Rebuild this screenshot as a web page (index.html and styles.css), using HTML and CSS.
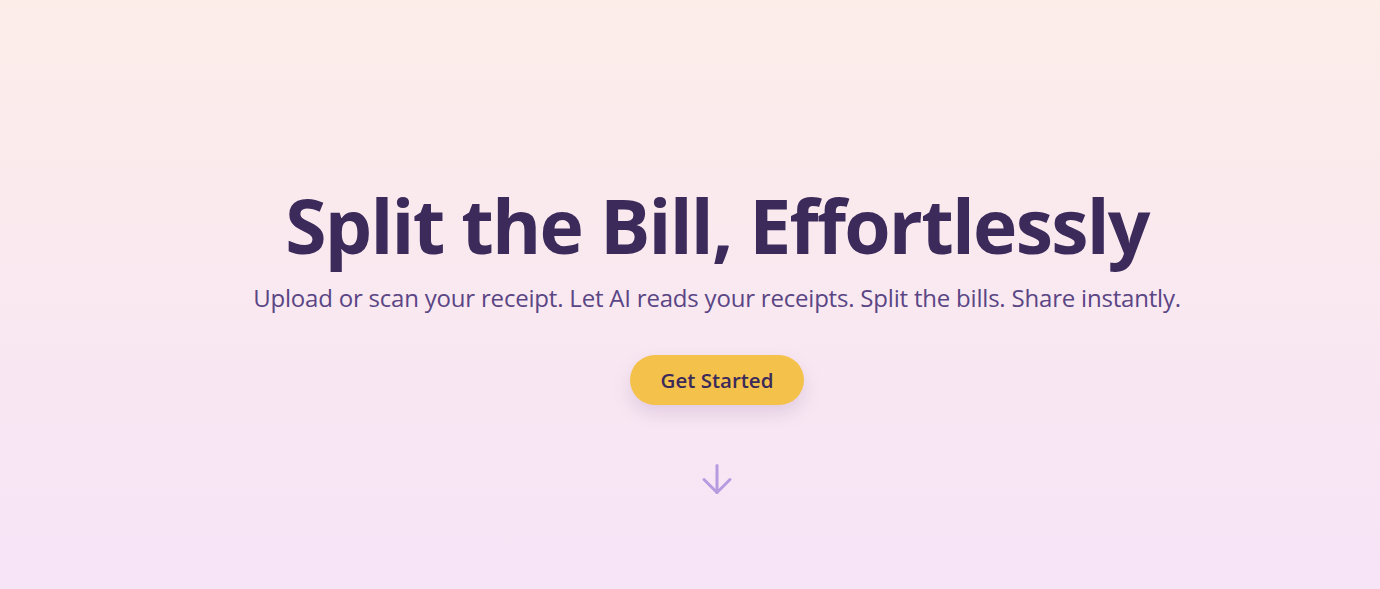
FILE: index.html
```html
<!DOCTYPE html>
<html lang="en">
<head>
<meta charset="utf-8">
<title>Split the Bill</title>
<link rel="stylesheet" href="styles.css">
</head>
<body>
<main class="hero">
  <div class="hero-inner">
    <h1 class="title">Split the Bill, Effortlessly</h1>
    <p class="subtitle">Upload or scan your receipt. Let AI reads your receipts. Split the bills. Share instantly.</p>
    <button class="cta">Get Started</button>
    <div class="scroll-hint">
      <svg width="32" height="32" viewBox="0 0 32 32" fill="none" stroke="currentColor" stroke-width="3" stroke-linecap="round" stroke-linejoin="round"><path d="M16 2.5v27"/><path d="M3 16.5l13 13 13-13"/></svg>
    </div>
  </div>
</main>
</body>
</html>
```
FILE: styles.css
```css
* { box-sizing: border-box; }
html, body { margin: 0; padding: 0; }
body {
  font-family: "Open Sans", "Noto Sans", sans-serif;
  background: linear-gradient(180deg, #fcede9 0%, #f6e4f7 100%);
  min-height: 100vh;
}
.hero {
  min-height: 589px;
  display: flex;
  justify-content: center;
  padding-left: 54px;
}
.hero-inner {
  display: flex;
  flex-direction: column;
  align-items: center;
  padding-top: 180px;
}
.title {
  margin: 0;
  font-size: 75px;
  font-weight: 700;
  color: #3b2a5a;
  line-height: 90px;
  letter-spacing: -1.75px;
}
.subtitle {
  margin: 11px 0 0;
  font-size: 24px;
  color: #5a4585;
  line-height: 33.6px;
  letter-spacing: -0.2px;
}
.cta {
  margin-top: 40px;
  width: 174px;
  height: 50px;
  border: none;
  border-radius: 25px;
  background: #f4c14b;
  color: #3b2a5a;
  font-family: inherit;
  font-size: 20.5px;
  font-weight: 600;
  box-shadow: 0 8px 18px rgba(120, 80, 140, 0.18);
}
.scroll-hint {
  margin-top: 58px;
  color: #b59ce0;
  display: flex;
}
```
